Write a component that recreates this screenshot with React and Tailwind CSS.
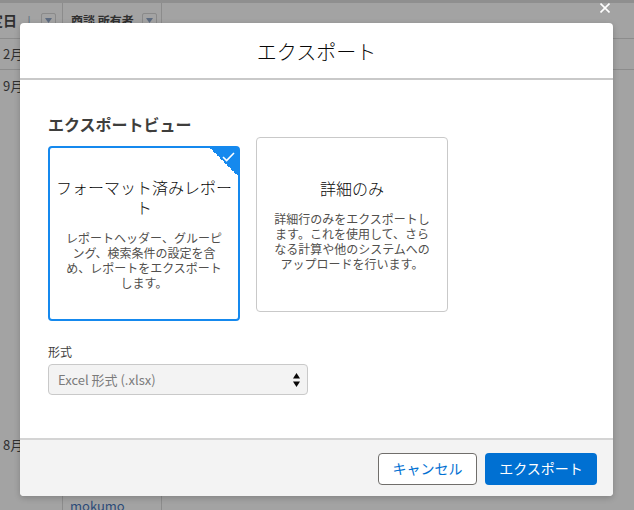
import React from "react";

const Caret = () => (
  <div className="w-[15px] h-[15px] shrink-0 border border-[#8a8a8a] rounded-[2px] flex items-center justify-center">
    <svg width="7" height="5" viewBox="0 0 7 5">
      <path d="M0 0h7L3.5 5z" fill="#5d6b80" />
    </svg>
  </div>
);

function Backdrop() {
  return (
    <div className="flex flex-col h-full text-[#2f2f2f]">
      <div className="h-[3px] bg-[#8f8f8f]" />
      {/* header row */}
      <div className="flex h-[36px] border-b border-[#8c8c8c] text-[12px] font-bold whitespace-nowrap">
        <div className="w-[63px] shrink-0 border-r border-[#8c8c8c] flex items-center justify-end gap-[6px] pr-[6px] overflow-hidden">
          <span className="text-[14px]">定日</span>
          <span className="text-[#5d6b80] font-normal text-[12px]">↓</span>
          <Caret />
        </div>
        <div className="w-[99px] shrink-0 border-r border-[#8c8c8c] flex items-center gap-[8px] pl-[8px]">
          <span>商談 所有者</span>
          <Caret />
        </div>
        <div className="flex-1" />
      </div>
      {/* rows */}
      <div className="flex h-[31px] border-b border-[#8c8c8c] items-center text-[13px] pl-[3px]">2月</div>
      <div className="flex h-[31px] items-center text-[13px] pl-[3px]">9月</div>
      <div className="flex-1" />
      <div className="flex h-[32px] items-center text-[13px] pl-[3px]">8月</div>
      <div className="h-[31px]" />
      <div className="flex h-[18px] shrink-0 text-[13px]">
        <div className="w-[63px] shrink-0 border-r border-[#8c8c8c]" />
        <div className="w-[99px] shrink-0 border-r border-[#8c8c8c] pl-[7px] pt-[5px] leading-[18px] text-[#2d4b78]">mokumo</div>
        <div className="flex-1" />
      </div>
    </div>
  );
}

function Check() {
  return (
    <svg width="13" height="10" viewBox="0 0 13 10" fill="none">
      <path d="M1 5l3.6 3.6L12 1" stroke="white" strokeWidth="1.6" />
    </svg>
  );
}

function ViewCard({ selected, title, desc, offset }) {
  return (
    <div
      className={
        "relative w-[192px] h-[175px] shrink-0 rounded-[4px] bg-white flex flex-col items-center justify-center text-center px-[4px] " +
        (selected ? "border-2 border-[#1589ee]" : "border border-[#c9c9c9]") +
        " " +
        offset
      }
    >
      {selected && (
        <div className="absolute top-0 right-0 w-[28px] h-[28px] bg-[linear-gradient(45deg,transparent_50%,#1589ee_50%)] flex justify-end pt-[4px] pr-[3px]">
          <Check />
        </div>
      )}
      <div className="text-[16px] leading-[20px] font-light text-[#080707]">{title}</div>
      <div className="mt-[13px] w-[160px] text-[12px] leading-[15px] text-[#514f4d]">{desc}</div>
    </div>
  );
}

function Modal() {
  return (
    <div className="absolute left-[20px] top-[23px] w-[593px] h-[473px] rounded-[4px] bg-white shadow-[0_2px_6px_rgba(0,0,0,0.2)] flex flex-col overflow-hidden">
      <div className="h-[57px] shrink-0 flex items-center justify-center border-b-2 border-[#c9c9c9] text-[20px] font-light text-[#080707] pt-[3px]">
        エクスポート
      </div>
      <div className="flex-1 flex flex-col px-[28px] pt-[34px]">
        <div className="text-[16px] font-bold leading-[20px] text-[#3e3e3c]">エクスポートビュー</div>
        <div className="flex items-start gap-[16px] mt-[3px]">
          <ViewCard
            selected
            offset="mt-[9px]"
            title="フォーマット済みレポート"
            desc="レポートヘッダー、グルーピング、検索条件の設定を含め、レポートをエクスポートします。"
          />
          <ViewCard
            offset="mt-0"
            title="詳細のみ"
            desc="詳細行のみをエクスポートします。これを使用して、さらなる計算や他のシステムへのアップロードを行います。"
          />
        </div>
        <div className="mt-[23px] text-[12px] leading-[16px] text-[#3e3e3c]">形式</div>
        <div className="mt-[4px] w-[260px] h-[31px] rounded-[4px] border border-[#c9c9c9] bg-[#f3f3f3] flex items-center justify-between pl-[9px] pr-[7px]">
          <span className="text-[13px] text-[#7b7b7b]">Excel 形式 (.xlsx)</span>
          <svg width="7" height="14" viewBox="0 0 7 14">
            <path d="M0 5.5L3.5 0L7 5.5z" fill="#080707" />
            <path d="M0 8.5h7L3.5 14z" fill="#080707" />
          </svg>
        </div>
      </div>
      <div className="h-[58px] shrink-0 border-t-2 border-[#d4d4d4] bg-[#f3f3f3] flex items-center justify-end gap-[8px] pr-[16px] pt-[1px]">
        <button className="w-[99px] h-[32px] rounded-[4px] border border-[#706e6b] bg-white text-[14px] text-[#0070d2]">
          キャンセル
        </button>
        <button className="w-[112px] h-[32px] rounded-[4px] bg-[#0070d2] text-[14px] text-white">
          エクスポート
        </button>
      </div>
    </div>
  );
}

export default function App() {
  return (
    <div className="relative w-[634px] h-[510px] overflow-hidden bg-[#a3a3a3] font-['Noto_Sans_CJK_JP','Noto_Sans',sans-serif]">
      <Backdrop />
      <Modal />
      <svg className="absolute left-[600px] top-[3px]" width="10" height="10" viewBox="0 0 10 10">
        <path d="M0.5 0.5l9 9M9.5 0.5l-9 9" stroke="white" strokeWidth="1.6" />
      </svg>
    </div>
  );
}
